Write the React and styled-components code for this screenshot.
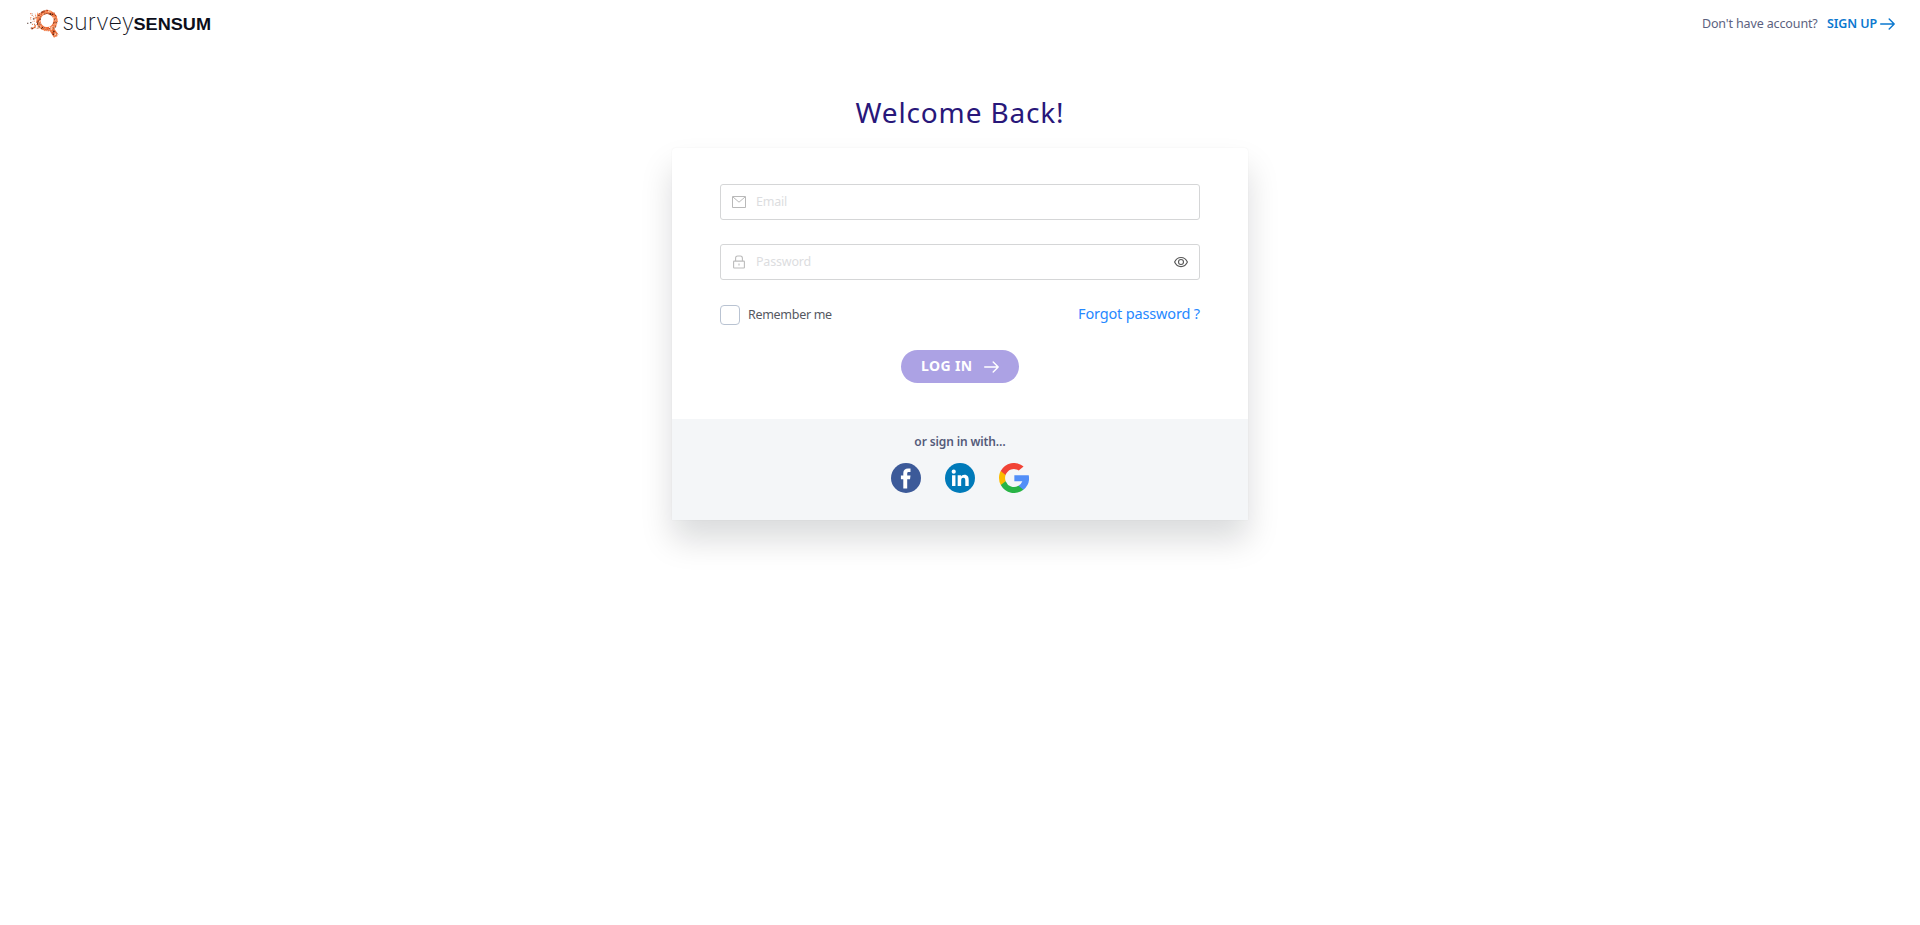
import React from 'react';
import styled, { createGlobalStyle } from 'styled-components';

const GlobalStyle = createGlobalStyle`
  *, *::before, *::after { box-sizing: border-box; }
  body { margin: 0; background: #fff; font-family: "Noto Sans", "Open Sans", sans-serif; }
  a { text-decoration: none; }
`;

const Page = styled.div`
  min-height: 925px;
  display: flex;
  flex-direction: column;
  align-items: center;
`;

const Header = styled.header`
  width: 100%;
  height: 48px;
  padding: 0 25px 0 26px;
  display: flex;
  align-items: center;
  justify-content: space-between;
`;

const LogoLink = styled.a`
  display: flex;
  svg { display: block; overflow: visible; }
`;

const SignUpRow = styled.div`
  display: flex;
  align-items: center;
  height: 20px;
  font-size: 12.5px;
  line-height: 20px;
  white-space: nowrap;
`;

const Muted = styled.span`
  width: 125px;
  color: #5c6280;
  letter-spacing: -0.13px;
`;

const SignUp = styled.a`
  display: flex;
  align-items: center;
  gap: 3px;
  color: #0b78cf;
  font-weight: 600;
  letter-spacing: -0.1px;
`;

const Title = styled.h1`
  margin: 42px 0 0;
  height: 58px;
  color: #28177a;
  font-size: 28px;
  font-weight: 400;
  line-height: 44px;
  letter-spacing: 0.85px;
  white-space: nowrap;
`;

const Card = styled.main`
  width: 576px;
  border-radius: 4px 4px 0 0;
  background: #fff;
  box-shadow: 0 20px 32px rgba(10, 14, 20, 0.145), 0 0 2px rgba(10, 16, 20, 0.05);
`;

const Form = styled.form`
  height: 271px;
  padding: 36px 48px 0;
  display: flex;
  flex-direction: column;
`;

const Field = styled.label`
  height: 36px;
  margin-bottom: 24px;
  padding: 0 11px;
  display: flex;
  align-items: center;
  gap: 10px;
  border: 1px solid #d5d6d7;
  border-radius: 3px;
  svg { flex: none; }
`;

const Input = styled.input`
  flex: 1;
  min-width: 0;
  height: 32px;
  padding: 0 0 1px;
  border: 0;
  outline: 0;
  background: transparent;
  font: 400 12.5px/20px "Noto Sans", sans-serif;
  letter-spacing: -0.2px;
  &::placeholder { color: #dcdde0; opacity: 1; }
`;

const Options = styled.div`
  display: flex;
  justify-content: space-between;
  align-items: center;
  height: 22px;
`;

const Remember = styled.label`
  display: flex;
  align-items: center;
  gap: 8px;
  color: #55585f;
  font-size: 12.5px;
  line-height: 20px;
  letter-spacing: -0.3px;
`;

const Checkbox = styled.span`
  width: 20px;
  height: 20px;
  border: 1px solid #b9c3d2;
  border-radius: 4px;
`;

const Forgot = styled.a`
  padding-bottom: 4px;
  color: #2688ff;
  font-size: 14.5px;
  line-height: 20px;
  letter-spacing: -0.16px;
`;

const LoginButton = styled.button`
  align-self: center;
  width: 118px;
  height: 33px;
  margin-top: 24px;
  padding: 0 20px;
  display: flex;
  align-items: center;
  justify-content: space-between;
  border: 0;
  border-radius: 17px;
  background: #aca2e4;
  color: #fff;
  font: 700 14px/31px "Noto Sans", sans-serif;
  letter-spacing: 0.4px;
  white-space: nowrap;
`;

const ButtonText = styled.span`
  padding-bottom: 3px;
`;

const Social = styled.section`
  height: 101px;
  padding-top: 13px;
  background: #f4f6f8;
  display: flex;
  flex-direction: column;
  align-items: center;
`;

const SocialTitle = styled.div`
  height: 31px;
  color: #545b7a;
  font-size: 12px;
  font-weight: 600;
  line-height: 20px;
  letter-spacing: -0.13px;
`;

const SocialIcons = styled.div`
  display: flex;
  gap: 24px;
  a, svg { display: block; }
`;

const SPECK_COLORS = ['#35170f', '#f26a35', '#f9a36f', '#b83f1c', '#f58452', '#ef7a45', '#fff1e8'];

function random(seed) {
  let s = seed;
  return () => {
    s = (s * 16807) % 2147483647;
    return s / 2147483647;
  };
}

function buildSpecks() {
  const next = random(421);
  const specks = [];
  for (let i = 0; i < 230; i += 1) {
    const angle = next() * Math.PI * 2;
    const radius = 7 + next() * 3.4;
    specks.push([21 + Math.cos(angle) * radius, 16.6 + Math.sin(angle) * radius, 0.7 + next() * 0.6, i % 7]);
  }
  for (let i = 0; i < 70; i += 1) {
    const reach = next() * next();
    specks.push([12 - reach * 11, 9 + next() * 16, 0.5 + next() * 0.7, [0, 1, 2, 5][i % 4]]);
  }
  for (let i = 0; i < 36; i += 1) {
    const t = next();
    specks.push([24.4 + t * 4.5 + next() * 3, 27.4 + t * 4.4 + next() * 2 - 1, 0.7 + next() * 0.6, i % 7]);
  }
  return specks;
}

const SPECKS = buildSpecks();

const Logo = () => (
  <svg width="188" height="40" viewBox="0 0 188 40" role="img" aria-label="surveySENSUM">
    <circle cx="21" cy="16.6" r="8.5" fill="none" stroke="#f58452" strokeWidth="4" />
    <path d="M23.500 26.500l4.500 7.200 4.500-3.200-4.800-6.500z" fill="#e96c38" />
    {SPECKS.map(([x, y, size, color], i) => (
      <rect key={i} x={x - size / 2} y={y - size / 2} width={size} height={size} fill={SPECK_COLORS[color]} />
    ))}
    <text x="36.3" y="26.3" textLength="72" lengthAdjust="spacingAndGlyphs" fontFamily="Inter, sans-serif" fontSize="23.5" fontWeight="200" fill="#14161f">survey</text>
    <text x="107.5" y="26.2" textLength="77.5" lengthAdjust="spacingAndGlyphs" fontFamily="Liberation Sans, sans-serif" fontSize="17" fontWeight="700" fill="#0c0e1a">SENSUM</text>
  </svg>
);

const Arrow = () => (
  <svg width="15" height="12" viewBox="0 0 15 12" fill="none" stroke="currentColor" strokeWidth="1.4" strokeLinecap="round" strokeLinejoin="round">
    <path d="M0.7 6H14.2M9.2 1l5 5-5 5" />
  </svg>
);

const MailIcon = () => (
  <svg width="14" height="12" viewBox="0 0 14 12" fill="none" stroke="#b9b9b9">
    <path d="M0.5 0.5h13v11h-13zM1 1l6 5.2L13 1" />
  </svg>
);

const LockIcon = () => (
  <svg width="14" height="14" viewBox="0 0 14 14" fill="none" stroke="#bcbcbc" strokeWidth="1.1">
    <rect x="1.6" y="6.1" width="10.8" height="6.9" rx="0.6" />
    <path d="M3.6 6V3.2Q3.6 1 5.6 1h2.8q2 0 2 2.2V6M7 8.4v2" />
  </svg>
);

const EyeIcon = () => (
  <svg width="14" height="12" viewBox="0 0 14 12" fill="none" stroke="#585858" strokeWidth="1.1">
    <path d="M0.6 6C3.3-.1 10.7-.1 13.4 6 10.7 12.1 3.3 12.1.6 6z" />
    <circle cx="7" cy="6" r="2.5" />
  </svg>
);

const Facebook = () => (
  <svg width="30" height="30" viewBox="0 0 30 30">
    <circle cx="15" cy="15" r="15" fill="#3c5a99" />
    <path d="M12.300 25.400v-9.200H9.900v-3.800h2.400v-2.400c0-3 1.900-4.500 4.700-4.500 1.300 0 2.200.1 2.500.1v3.400h-1.700c-1.400 0-1.600.7-1.600 1.700v1.700h3.300l-.5 3.800h-2.800v9.200z" fill="#fff" />
  </svg>
);

const LinkedIn = () => (
  <svg width="30" height="30" viewBox="0 0 30 30">
    <circle cx="15" cy="15" r="15" fill="#007ab9" />
    <g fill="#fff" transform="translate(-0.900 -0.800) scale(1.060)">
      <path d="M7.500 12.200h3.200v10.300H7.500zM12.800 12.200h3.100v1.400c.6-1 1.700-1.700 3.200-1.700 3.300 0 4.100 2.200 4.100 5v5.600H20v-5c0-1.300-.1-2.800-1.800-2.800-1.700 0-2.100 1.300-2.100 2.700v5.100h-3.300z" />
      <circle cx="9.100" cy="8.900" r="1.950" />
    </g>
  </svg>
);

const Google = () => (
  <svg width="30" height="30" viewBox="0 0 30 30">
    <path d="M6.650 18.130 5.600 22.030 1.790 22.110A14.940 14.940 0 0 1 0 15c0-2.490.6-4.830 1.680-6.900l3.400.62 1.490 3.380A8.900 8.900 0 0 0 6.650 18.130z" fill="#fbbb00" />
    <path d="M29.740 12.200a15 15 0 0 1-5.330 14.490l-4.280-.22-.6-3.780a8.940 8.940 0 0 0 3.840-4.560h-8.020V12.200z" fill="#518ef8" />
    <path d="M24.410 26.690A15 15 0 0 1 1.790 22.110l4.860-3.980a8.920 8.920 0 0 0 12.850 4.570z" fill="#28b446" />
    <path d="M24.590 3.450 19.730 7.430A8.920 8.920 0 0 0 6.570 12.100L1.680 8.100A15 15 0 0 1 24.590 3.450z" fill="#f14336" />
  </svg>
);

export default function App() {
  return (
    <Page>
      <GlobalStyle />
      <Header>
        <LogoLink href="#"><Logo /></LogoLink>
        <SignUpRow>
          <Muted>Don't have account?</Muted>
          <SignUp href="#">SIGN UP<Arrow /></SignUp>
        </SignUpRow>
      </Header>
      <Title>Welcome Back!</Title>
      <Card>
        <Form>
          <Field>
            <MailIcon />
            <Input placeholder="Email" />
          </Field>
          <Field>
            <LockIcon />
            <Input type="password" placeholder="Password" />
            <EyeIcon />
          </Field>
          <Options>
            <Remember><Checkbox />Remember me</Remember>
            <Forgot href="#">Forgot password ?</Forgot>
          </Options>
          <LoginButton type="button"><ButtonText>LOG IN</ButtonText><Arrow /></LoginButton>
        </Form>
        <Social>
          <SocialTitle>or sign in with…</SocialTitle>
          <SocialIcons>
            <a href="#" aria-label="Facebook"><Facebook /></a>
            <a href="#" aria-label="LinkedIn"><LinkedIn /></a>
            <a href="#" aria-label="Google"><Google /></a>
          </SocialIcons>
        </Social>
      </Card>
    </Page>
  );
}
